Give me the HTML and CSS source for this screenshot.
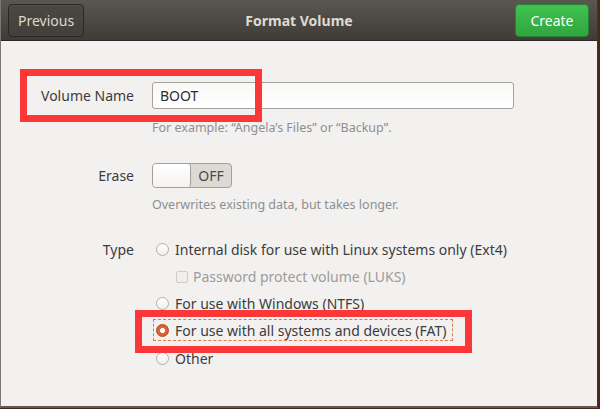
FILE: index.html
```html
<!DOCTYPE html>
<html>
<head>
<meta charset="utf-8">
<link rel="stylesheet" href="styles.css">
</head>
<body>
<div class="window">
  <header class="headerbar">
    <button class="btn btn-prev">Previous</button>
    <div class="title">Format Volume</div>
    <button class="btn btn-create">Create</button>
  </header>
  <main class="content">
    <div class="row row-name">
      <div class="label">Volume Name</div>
      <div class="field">
        <div class="entry">BOOT</div>
        <div class="hint">For example: “Angela’s Files” or “Backup”.</div>
      </div>
    </div>

    <div class="row row-erase">
      <div class="label">Erase</div>
      <div class="field">
        <div class="switch"><span class="knob"></span><span class="state">OFF</span></div>
        <div class="hint hint-tight">Overwrites existing data, but takes longer.</div>
      </div>
    </div>

    <div class="row row-type">
      <div class="label">Type</div>
      <div class="field options">
        <div class="option"><span class="radio"></span><span>Internal disk for use with Linux systems only (Ext4)</span></div>
        <div class="option sub disabled"><span class="check"></span><span>Password protect volume (LUKS)</span></div>
        <div class="option"><span class="radio"></span><span>For use with Windows (NTFS)</span></div>
        <div class="option focused"><span class="radio checked"></span><span>For use with all systems and devices (FAT)</span></div>
        <div class="option option-last"><span class="radio"></span><span>Other</span></div>
      </div>
    </div>
    <div class="mark mark-name"></div>
    <div class="mark mark-fat"></div>
  </main>
</div>
</body>
</html>
```

FILE: styles.css
```css
* { box-sizing: border-box; }
html, body { margin: 0; padding: 0; }
body {
  width: 600px;
  height: 409px;
  background: #4a2718;
  font-family: "Noto Sans", "DejaVu Sans", sans-serif;
  font-size: 14px;
  overflow: hidden;
}
.window {
  width: 598px;
  height: 408px;
  background: #f2f1f0;
  border-left: 1px solid #7a7874;
  border-right: 1px solid #3a3835;
  border-bottom: 2px solid #5c5b59;
  display: flex;
  flex-direction: column;
}
.headerbar {
  height: 41px;
  flex: none;
  background: linear-gradient(#5a5751, #3f3c37);
  border-bottom: 1px solid #2b2926;
  display: flex;
  align-items: center;
  justify-content: space-between;
  padding: 0 8px 0 7px;
  position: relative;
}
.title {
  position: absolute;
  left: 0; right: 0;
  text-align: center;
  color: #dfdbd2;
  font-weight: bold;
  font-size: 14px;
  pointer-events: none;
}
.btn {
  font-family: inherit;
  font-size: 14px;
  height: 33px;
  border-radius: 4px;
  padding: 0 9px;
  margin-top: 1px;
}
.btn-prev {
  width: 76px;
  background: linear-gradient(#4b4843, #43403b);
  border: 1px solid #2a2825;
  color: #dcd8d0;
  box-shadow: inset 0 1px rgba(255,255,255,0.05);
}
.btn-create {
  width: 74px;
  background: linear-gradient(#41c250, #30a43f);
  border: 1px solid #268434;
  color: #ffffff;
}
.content {
  position: relative;
  flex: 1;
  padding-top: 41px;
  color: #3c3c3c;
}
.row {
  display: grid;
  grid-template-columns: 133px 1fr;
  column-gap: 18px;
  align-items: start;
}
.label {
  text-align: right;
  height: 27px;
  line-height: 27px;
}
.field { padding-right: 83px; }
.entry {
  height: 27px;
  border: 1px solid #a6a29c;
  border-radius: 3px;
  background: linear-gradient(#f8f8f7, #ffffff);
  padding-left: 7px;
  line-height: 25px;
  color: #2e2e2e;
}
.hint {
  color: #8d8f90;
  font-size: 12.5px;
  margin-top: 10px;
  height: 17px;
  line-height: 17px;
}
.hint-tight { margin-top: 8px; }
.row-erase { margin-top: 27px; }
.row-erase .label { height: 25px; line-height: 25px; }
.switch {
  width: 80px;
  height: 25px;
  border: 1px solid #a39f99;
  border-radius: 4px;
  background: #dcdad5;
  display: flex;
  align-items: center;
}
.knob {
  width: 38px;
  height: 23px;
  background: linear-gradient(#ffffff, #f4f3f1);
  border-right: 1px solid #a39f99;
  border-radius: 3px;
}
.state {
  flex: 1;
  text-align: center;
  color: #4a4a4a;
}
.row-type { margin-top: 23px; }
.option {
  height: 27px;
  display: flex;
  align-items: center;
  gap: 6px;
}
.option.sub { padding-left: 24px; gap: 5px; }
.option.disabled { color: #9c9c9b; }
.option-last { margin-top: 2px; }
.radio {
  width: 13px;
  height: 13px;
  border-radius: 50%;
  border: 1px solid #b3b0aa;
  background: linear-gradient(#ffffff, #f0efed);
  margin-left: 4px;
  flex: none;
}
.radio.checked {
  background: radial-gradient(circle, #ffffff 0 2.2px, #e06a3f 2.8px, #c9521f 100%);
  border-color: #b34a1f;
}
.check {
  width: 12px;
  height: 12px;
  border: 1px solid #cfccc7;
  border-radius: 2px;
  background: #f0efed;
  flex: none;
}
.focused {
  outline: 1px dashed #e2774a;
  outline-offset: -3px;
  width: 304px;
  height: 26px;
  margin-left: -1px;
  padding-left: 1px;
}
.mark {
  position: absolute;
  border: 7px solid #fb3737;
}
.mark-name { left: 19px; top: 28px; width: 242px; height: 53px; }
.mark-fat { left: 134px; top: 269px; width: 337px; height: 43px; }
```
